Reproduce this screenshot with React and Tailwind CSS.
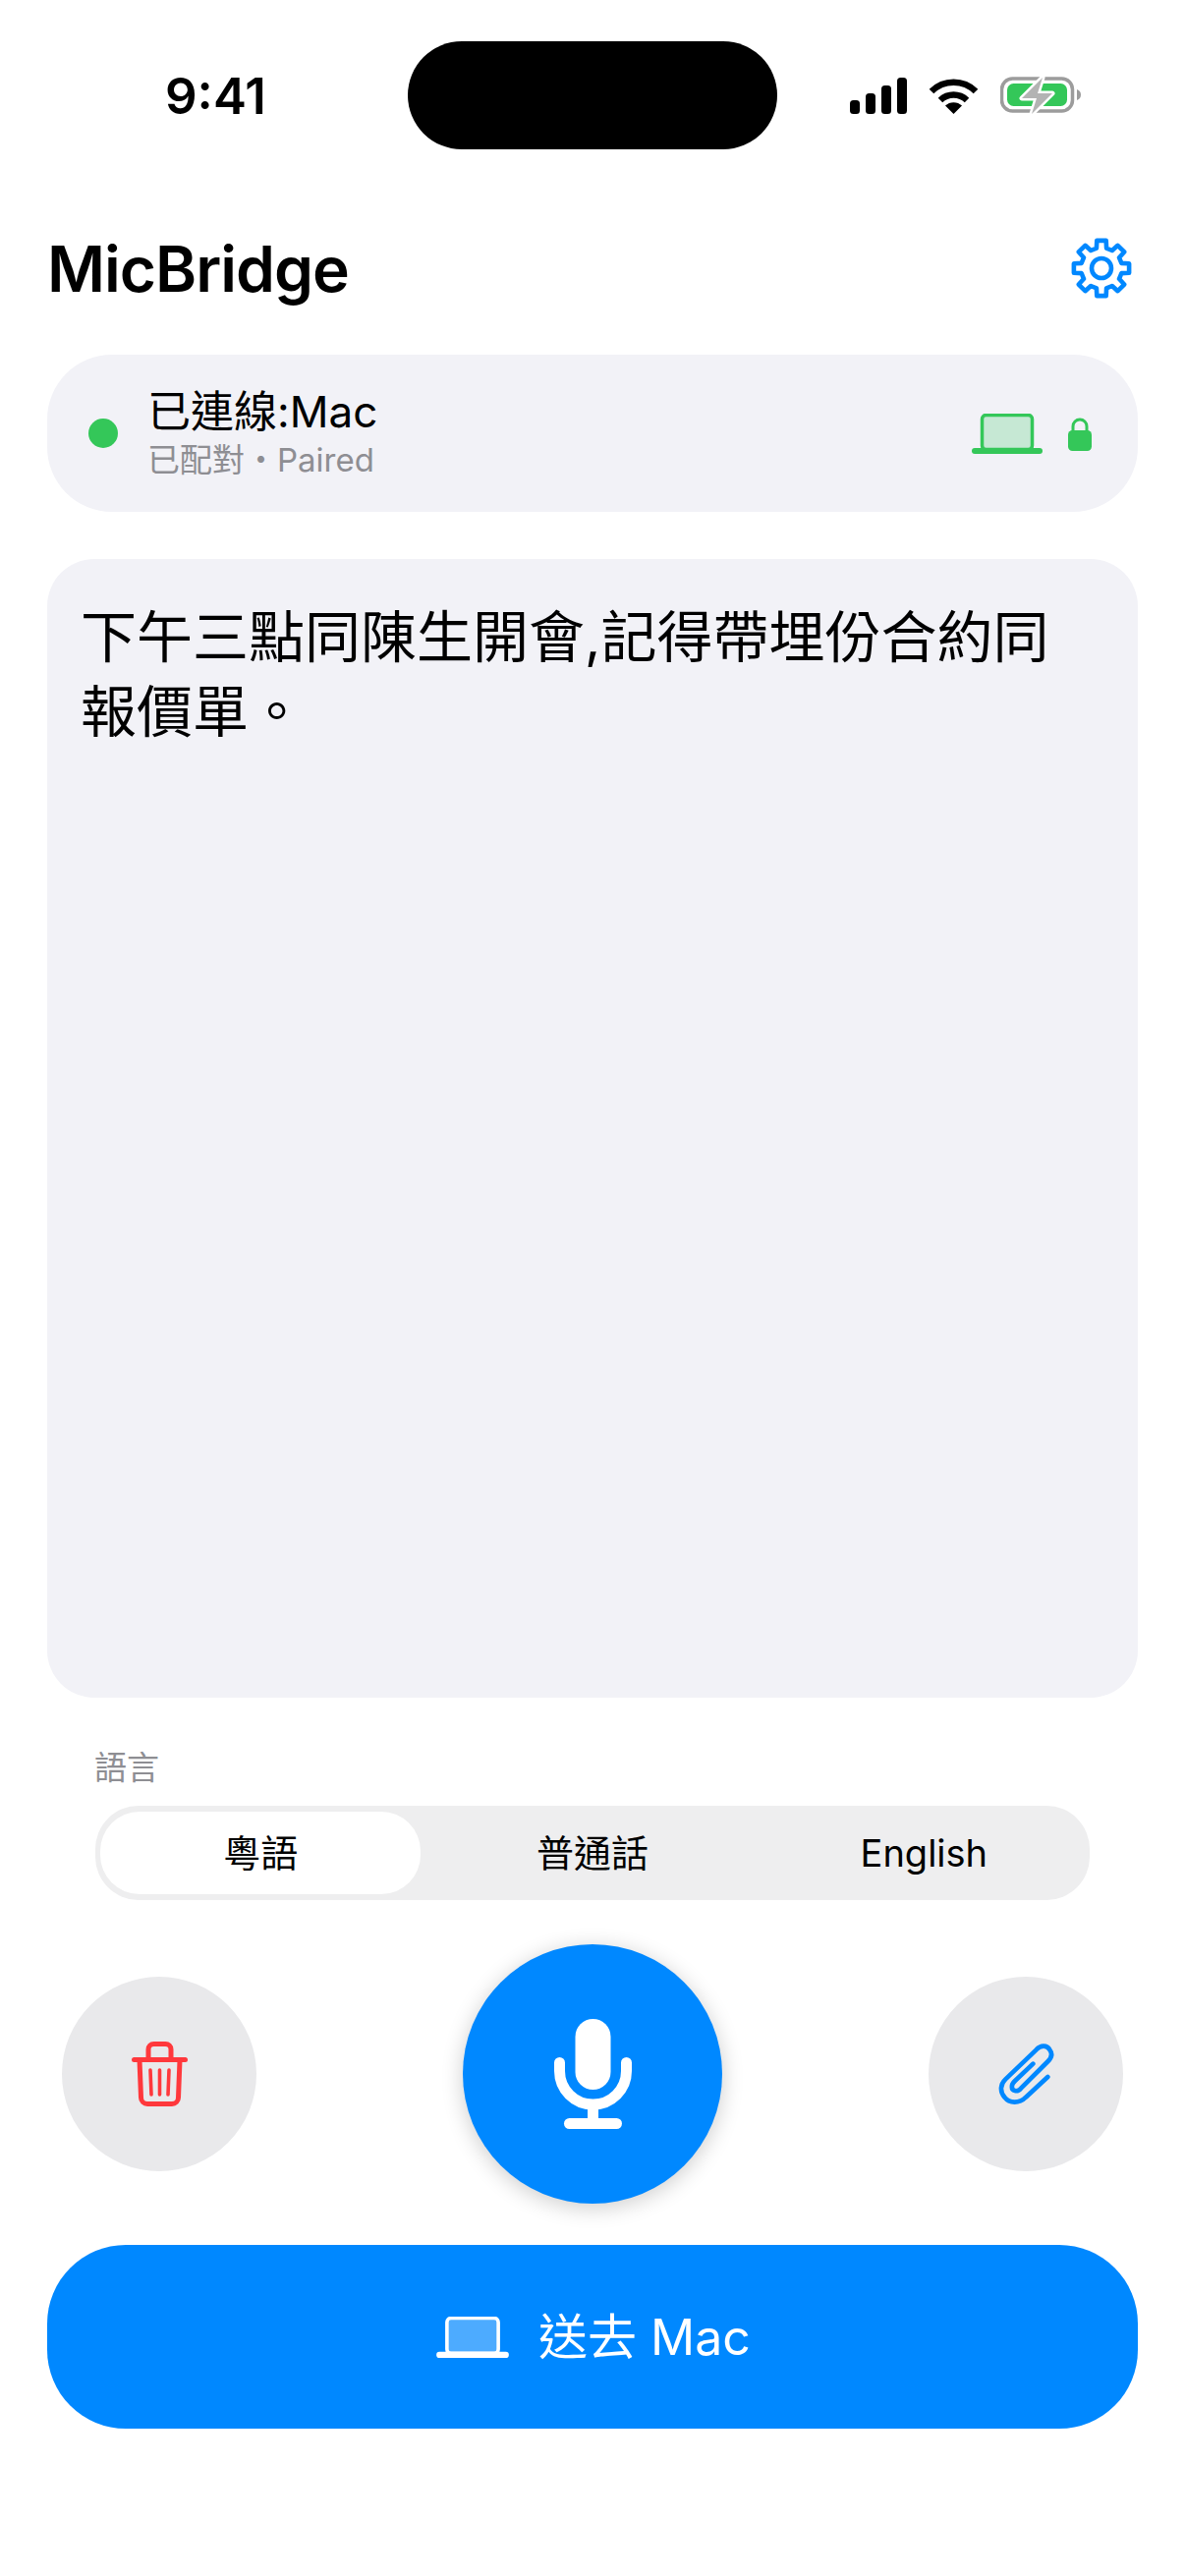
import React from "react";

const sans = "font-['Inter','Noto_Sans_CJK_TC',sans-serif]";

// outline of an eight-tooth gear around (35,35), one tooth every 45 degrees
function gearPath() {
  const point = (r, deg) => {
    const a = ((deg - 90) * Math.PI) / 180;
    return `${(35 + r * Math.cos(a)).toFixed(2)} ${(35 + r * Math.sin(a)).toFixed(2)}`;
  };
  const parts = [];
  for (let i = 0; i < 8; i++) {
    const c = i * 45;
    parts.push(`${i === 0 ? "M" : "L"}${point(21, c - 14)}`);
    parts.push(`L${point(28.5, c - 9.5)}`);
    parts.push(`L${point(28.5, c + 9.5)}`);
    parts.push(`L${point(21, c + 14)}`);
  }
  return parts.join(" ") + " Z";
}

function GearGlyph() {
  return (
    <svg width="70" height="70" viewBox="0 0 70 70" fill="none" stroke="#0088ff" strokeWidth="4.6" strokeLinejoin="round" className="block">
      <path d={gearPath()} />
      <circle cx="35" cy="35" r="10" />
    </svg>
  );
}

// status bar glyphs, all sized in real pixels
function SignalBars() {
  return (
    <svg width="58" height="37" viewBox="0 0 58 37" className="block">
      <rect x="0" y="23" width="10" height="14" rx="3.5" fill="#000" />
      <rect x="16" y="16" width="10" height="21" rx="3.5" fill="#000" />
      <rect x="32" y="8" width="10" height="29" rx="3.5" fill="#000" />
      <rect x="48" y="0" width="10" height="37" rx="3.5" fill="#000" />
    </svg>
  );
}

function WifiGlyph() {
  return (
    <svg width="51" height="37" viewBox="0 0 51 37" className="block">
      <path d="M3 14 A32 32 0 0 1 48 14" fill="none" stroke="#000" strokeWidth="6.5" />
      <path d="M12 23 A19.5 19.5 0 0 1 39 23" fill="none" stroke="#000" strokeWidth="6.5" />
      <path d="M25.5 37 L17 28.5 A12.5 12.5 0 0 1 34 28.5 Z" fill="#000" />
    </svg>
  );
}

function BatteryGlyph() {
  return (
    <svg width="82" height="40" viewBox="0 0 82 40" className="block">
      <rect x="1.5" y="3" width="72" height="33" rx="11" fill="none" stroke="#9c9c9c" strokeWidth="3.5" />
      <rect x="7" y="8" width="61" height="23" rx="6.5" fill="#34c759" />
      <path d="M78 14 C81 15 82 17 82 19.5 C82 22 81 24 78 25 Z" fill="#9c9c9c" />
      <path d="M43 2 L22 23 L37 23 L32 39 L53 18 L38 18 Z" fill="#b3b3b3" stroke="#fff" strokeWidth="5" strokeLinejoin="round" paintOrder="stroke" />
    </svg>
  );
}

function LaptopGlyph({ color, tint, width = 72, height = 41 }) {
  return (
    <svg width={width} height={height} viewBox="0 0 72 41" className="block">
      <rect x="10.5" y="1.5" width="51" height="35" rx="4" fill={tint} stroke={color} strokeWidth="3.5" />
      <rect x="0" y="35" width="72" height="6" rx="3" fill={color} />
    </svg>
  );
}

function LockGlyph() {
  return (
    <svg width="24" height="35" viewBox="0 0 24 35" className="block">
      <path d="M5 15 V10 A7 7 0 0 1 19 10 V15" fill="none" stroke="#34c759" strokeWidth="3" />
      <rect x="0" y="14" width="24" height="21" rx="4.5" fill="#34c759" />
    </svg>
  );
}

function TrashGlyph() {
  return (
    <svg width="57" height="66" viewBox="0 0 57 66" fill="none" stroke="#ff383c" strokeWidth="5" strokeLinecap="round" strokeLinejoin="round" className="block">
      <path d="M2.5 18.5 H54.5" />
      <path d="M17 17 V8 A5.5 5.5 0 0 1 22.5 2.5 H34.5 A5.5 5.5 0 0 1 40 8 V17" />
      <path d="M8 19 L9.5 57 A6.5 6.5 0 0 0 16 63.5 H41 A6.5 6.5 0 0 0 47.5 57 L49 19" />
      <path d="M19 29 L20 54 M28.5 29 V54 M38 29 L37 54" strokeWidth="3.6" />
    </svg>
  );
}

function MicGlyph() {
  return (
    <svg width="79" height="112" viewBox="0 0 79 112" className="block">
      <rect x="21.5" y="0" width="36" height="72" rx="18" fill="#fff" />
      <path d="M5.5 44.5 V53 A34 34 0 0 0 73.5 53 V44.5" fill="none" stroke="#fff" strokeWidth="11" strokeLinecap="round" />
      <rect x="34" y="88" width="11" height="16" fill="#fff" />
      <rect x="10" y="101" width="59" height="11" rx="5.5" fill="#fff" />
    </svg>
  );
}

function ClipGlyph() {
  return (
    <svg width="61" height="68" viewBox="340 262 183 204" fill="none" stroke="#0088ff" strokeWidth="14" strokeLinecap="round" strokeLinejoin="round" className="block">
      <path d="M497 373 L430 435 C410 455 380 455 365 435 C350 418 352 395 368 380 L462 290 C475 275 495 275 503 290 C512 302 508 315 498 325 L415 408 C405 420 385 418 388 400 C388 395 392 390 397 385 L452 333" />
    </svg>
  );
}

export default function App() {
  return (
    <div className={`w-[1206px] h-[2622px] bg-white text-black overflow-hidden ${sans}`}>
      {/* Status bar */}
      <div className="flex items-start pt-[42px] h-[152px]">
        <div className="w-[415px] h-[110px] pl-[168px] flex items-center">
          <span className="text-[51px] font-semibold leading-none">9:41</span>
        </div>
        <div className="w-[376px] h-[110px] rounded-[55px] bg-black" />
        <div className="flex-1 h-[110px] pl-[74px] flex items-center">
          <SignalBars />
          <div className="ml-[22px]"><WifiGlyph /></div>
          <div className="ml-[22px]"><BatteryGlyph /></div>
        </div>
      </div>

      <div className="px-[48px]">
        {/* Title row */}
        <div className="mt-[78px] h-[88px] flex items-center justify-between">
          <h1 className="text-[64px] font-semibold leading-none tracking-[-1px]">MicBridge</h1>
          <div className="mr-[2px] -mt-[2px]"><GearGlyph /></div>
        </div>

        {/* Connection card */}
        <div className="mt-[43px] h-[160px] rounded-[66px] bg-[#f2f2f7] flex items-center pl-[42px] pr-[47px]">
          <span className="w-[30px] h-[30px] rounded-full bg-[#34c759]" />
          <div className="ml-[30px] flex-1">
            <div className="text-[44px] leading-[56px] -mt-[2px]">已連線:Mac</div>
            <div className="text-[33px] leading-[42px] text-[#8e8e93]">已配對・Paired</div>
          </div>
          <LaptopGlyph color="#34c759" tint="#c6e8d4" />
          <div className="ml-[26px]"><LockGlyph /></div>
        </div>

        {/* Transcript */}
        <div className="mt-[48px] h-[1159px] rounded-[48px] bg-[#f2f2f7] pl-[34px] pr-[60px] pt-[42px]">
          <p className="text-[57px] leading-[76px]">下午三點同陳生開會,記得帶埋份合約同報價單。</p>
        </div>

        {/* Language picker */}
        <div className="mt-[51px] ml-[48px] text-[33px] leading-[40px] text-[#8e8e93]">語言</div>
        <div className="mt-[19px] mx-[49px] h-[96px] rounded-[44px] bg-[#eeeeef] grid grid-cols-3 gap-[12px] p-[6px]">
          <div className="-ml-[1px] rounded-[40px] bg-white flex items-center justify-center text-[38px]">粵語</div>
          <div className="flex items-center justify-center text-[38px]">普通話</div>
          <div className="flex items-center justify-center text-[38px]">English</div>
        </div>

        {/* Action buttons */}
        <div className="mt-[45px] h-[264px] px-[15px] flex items-center justify-between">
          <div className="w-[198px] h-[198px] rounded-full bg-[#e9e9eb] flex items-center justify-center">
            <TrashGlyph />
          </div>
          <div className="w-[264px] h-[264px] rounded-full bg-[#0088ff] shadow-[0_4px_22px_rgba(0,0,0,0.2)] flex items-center justify-center">
            <MicGlyph />
          </div>
          <div className="w-[198px] h-[198px] rounded-full bg-[#e9e9eb] flex items-center justify-center">
            <ClipGlyph />
          </div>
        </div>

        {/* Send */}
        <div className="mt-[42px] h-[187px] rounded-[80px] bg-[#0088ff] flex items-center justify-center gap-[30px] text-white">
          <div className="ml-[2px]"><LaptopGlyph color="#fff" tint="#4dabff" width={74} height={42} /></div>
          <span className="text-[50px] leading-none">送去 Mac</span>
        </div>
      </div>
    </div>
  );
}
